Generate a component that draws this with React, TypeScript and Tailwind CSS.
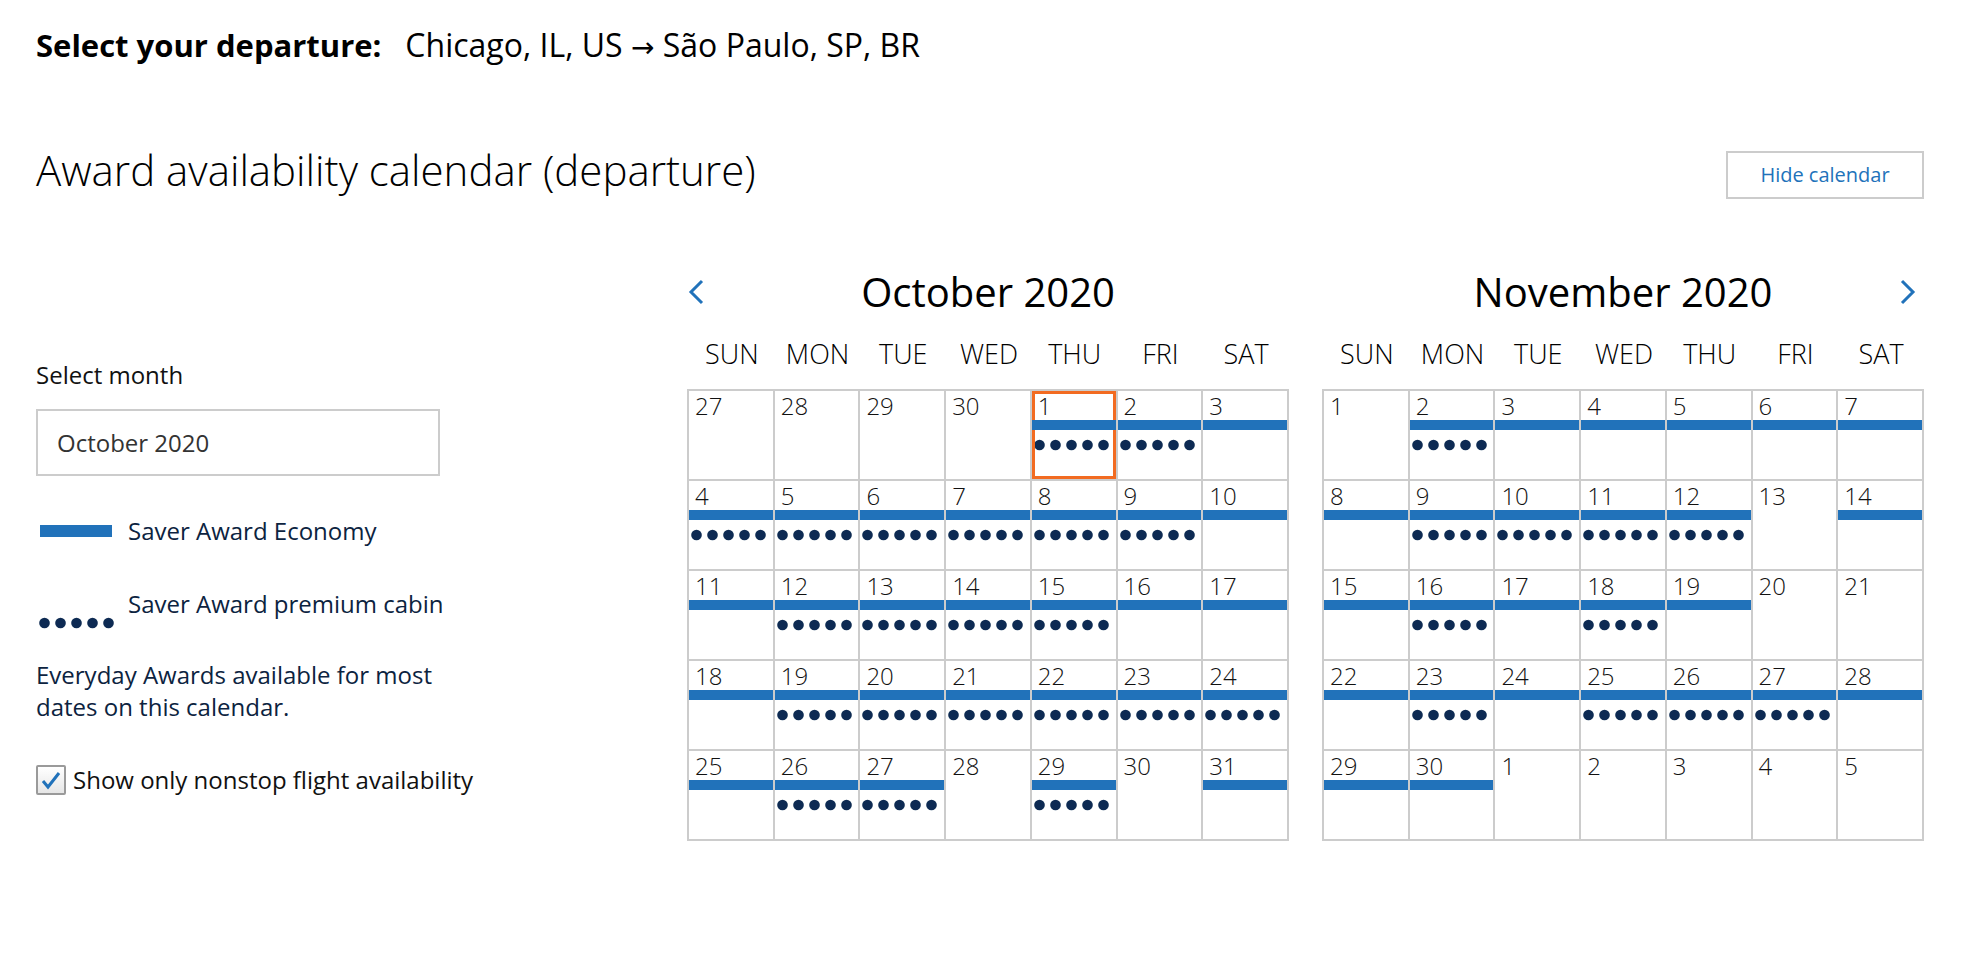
import React from 'react';

const font = { fontFamily: '"Open Sans", "Liberation Sans", sans-serif' };

const DAYS = ['SUN', 'MON', 'TUE', 'WED', 'THU', 'FRI', 'SAT'];

// codes: b = saver economy bar, d = premium dots, s = selected
const october = {
    title: 'October 2020',
    nums: [27, 28, 29, 30, ...Array.from({ length: 31 }, (_, i) => i + 1)],
    codes: [
        '', '', '', '', 'bds', 'bd', 'b',
        'bd', 'bd', 'bd', 'bd', 'bd', 'bd', 'b',
        'b', 'bd', 'bd', 'bd', 'bd', 'b', 'b',
        'b', 'bd', 'bd', 'bd', 'bd', 'bd', 'bd',
        'b', 'bd', 'bd', '', 'bd', '', 'b',
    ],
};

const november = {
    title: 'November 2020',
    nums: [...Array.from({ length: 30 }, (_, i) => i + 1), 1, 2, 3, 4, 5],
    codes: [
        '', 'bd', 'b', 'b', 'b', 'b', 'b',
        'b', 'bd', 'bd', 'bd', 'bd', '', 'b',
        'b', 'bd', 'b', 'bd', 'b', '', '',
        'b', 'bd', 'b', 'bd', 'bd', 'bd', 'b',
        'b', 'b', '', '', '', '', '',
    ],
};

function Dots({ className = '' }: { className?: string }) {
    return (
        <svg width="80" height="12" viewBox="0 0 80 12" className={className}>
            <defs>
                <filter id="soft" x="-20%" y="-50%" width="140%" height="200%">
                    <feGaussianBlur stdDeviation="0.6" />
                </filter>
            </defs>
            {[0, 1, 2, 3, 4].map((i) => (
                <circle key={i} cx={5.5 + i * 16} cy={6} r={5.3} fill="#0b2a52" filter="url(#soft)" />
            ))}
        </svg>
    );
}

function Chevron({ dir }: { dir: 'left' | 'right' }) {
    return (
        <svg width="18" height="26" viewBox="0 0 18 26" fill="none">
            <polyline
                points={dir === 'left' ? '15,2 4,13 15,24' : '3,2 14,13 3,24'}
                stroke="#2172ba"
                strokeWidth="3"
            />
        </svg>
    );
}

function Month({ data, nav }: { data: typeof october; nav: 'left' | 'right' }) {
    return (
        <div className="w-[602px]">
            <div className="grid grid-cols-[40px_1fr_40px] items-center h-[56px]">
                <div className="flex justify-start">{nav === 'left' && <Chevron dir="left" />}</div>
                <div className="text-center text-[40px] leading-[56px] text-black">{data.title}</div>
                <div className="flex justify-end pr-[7px]">{nav === 'right' && <Chevron dir="right" />}</div>
            </div>

            <div className="mt-[16px] grid grid-cols-7 pl-[2px]">
                {DAYS.map((d) => (
                    <div key={d} className="text-center text-[27px] leading-[36px] font-light text-black">
                        {d}
                    </div>
                ))}
            </div>

            <div className="mt-[17px] grid grid-cols-7 border-l-2 border-t-2 border-[#cccccc]">
                {data.nums.map((n, i) => {
                    const c = data.codes[i];
                    return (
                        <div key={i} className="relative h-[90px] border-r-2 border-b-2 border-[#cccccc]">
                            {c.includes('s') && (
                                <div className="absolute inset-0 border-[3px] border-[#f26b21]" />
                            )}
                            <div className="pl-[6px] pt-[1px] text-[24px] leading-[28px] font-light text-[#111]">{n}</div>
                            {c.includes('b') ? (
                                <div className="relative z-10 h-[10px] bg-[#2172ba]" />
                            ) : (
                                <div className="h-[10px]" />
                            )}
                            {c.includes('d') && <Dots className="mt-[9px] ml-[2px]" />}
                        </div>
                    );
                })}
            </div>
        </div>
    );
}

export default function App() {
    return (
        <div className="min-h-screen bg-white pl-[36px] pr-[52px] pt-[26px]" style={font}>
            {/* route line */}
            <div className="flex h-[38px] items-center whitespace-nowrap text-black">
                <span className="text-[31px] leading-[38px] font-bold">Select your departure:</span>
                <span className="ml-[24px] text-[32px] leading-[38px]">
                    Chicago, IL, US{' '}
                    <span style={{ fontFamily: '"DejaVu Sans", sans-serif' }} className="text-[28px] leading-none">→</span>{' '}
                    São Paulo, SP, BR
                </span>
            </div>

            {/* title row */}
            <div className="mt-[77px] flex items-start justify-between">
                <h1 className="text-[42px] leading-[57px] font-light text-black">
                    Award availability calendar (departure)
                </h1>
                <button className="mt-[10px] h-[48px] w-[198px] border-2 border-[#cccccc] bg-white text-[20px] text-[#2172ba]">
                    Hide calendar
                </button>
            </div>

            <div className="mt-[65px] flex justify-between">
                {/* left panel */}
                <div className="w-[420px] pt-[95px]">
                    <div className="text-[24px] leading-[32px] text-[#111]">Select month</div>
                    <div className="mt-[18px] flex h-[67px] w-[404px] items-center border-2 border-[#cccccc] pl-[19px] text-[24px] text-[#333]">
                        October 2020
                    </div>

                    <div className="mt-[39px] flex items-center">
                        <div className="ml-[4px] h-[12px] w-[72px] bg-[#2172ba]" />
                        <span className="ml-[16px] text-[24px] leading-[32px] text-[#0c2340]">Saver Award Economy</span>
                    </div>

                    <div className="mt-[41px] flex items-start">
                        <Dots className="ml-[3px] mt-[29px] shrink-0" />
                        <span className="ml-[9px] text-[24px] leading-[32px] text-[#0c2340] whitespace-nowrap">
                            Saver Award premium cabin
                        </span>
                    </div>

                    <p className="mt-[30px] w-[410px] text-[24px] leading-[32px] text-[#0c2340]">
                        Everyday Awards available for most dates on this calendar.
                    </p>

                    <label className="mt-[41px] flex items-center whitespace-nowrap">
                        <span className="flex h-[30px] w-[30px] shrink-0 items-center justify-center rounded-[2px] border-2 border-[#9a9a9a] bg-gradient-to-b from-white to-[#e6e6e6]">
                            <svg width="22" height="20" viewBox="0 0 22 20" fill="none">
                                <polyline points="3,11 8,17 19,3" stroke="#2172ba" strokeWidth="3" />
                            </svg>
                        </span>
                        <span className="ml-[7px] text-[24px] leading-[32px] text-[#111]">
                            Show only nonstop flight availability
                        </span>
                    </label>
                </div>

                {/* calendars */}
                <div className="flex gap-[33px]">
                    <Month data={october} nav="left" />
                    <Month data={november} nav="right" />
                </div>
            </div>
        </div>
    );
}
